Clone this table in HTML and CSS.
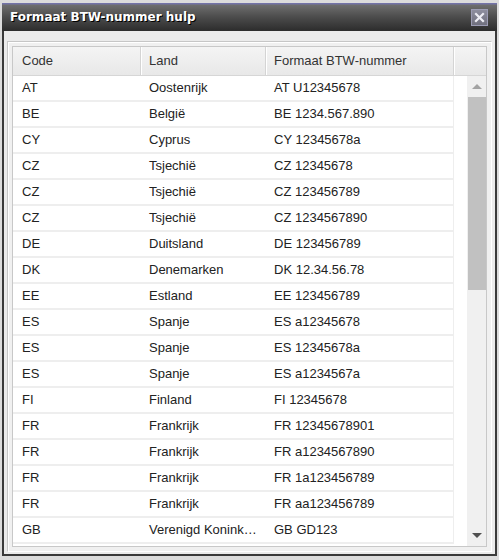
FILE: index.html
```html
<!DOCTYPE html>
<html lang="nl">
<head>
  <meta charset="UTF-8" />
  <title>Formaat BTW-nummer hulp</title>
  <link rel="stylesheet" href="styles.css">
</head>
<body>
  <div class="window">
    <div class="title-bar">
      <span class="title">Formaat BTW-nummer hulp</span>
      <span class="close-btn">
        <svg width="11" height="11" viewBox="0 0 11 11"><path d="M2 2 L9 9 M9 2 L2 9" stroke="#eeeef4" stroke-width="2.2" stroke-linecap="square"/></svg>
      </span>
    </div>
    <div class="content">
      <div class="panel">
        <div class="grid">
          <div class="grid-head">
            <div class="hcell col-code">Code</div>
            <div class="hcell col-land">Land</div>
            <div class="hcell col-fmt">Formaat BTW-nummer</div>
            <div class="hcell col-fill"></div>
          </div>
          <div class="grid-body">
            <div class="rows">
              <div class="row"><span>AT</span><span>Oostenrijk</span><span>AT U12345678</span></div>
              <div class="row"><span>BE</span><span>België</span><span>BE 1234.567.890</span></div>
              <div class="row"><span>CY</span><span>Cyprus</span><span>CY 12345678a</span></div>
              <div class="row"><span>CZ</span><span>Tsjechië</span><span>CZ 12345678</span></div>
              <div class="row"><span>CZ</span><span>Tsjechië</span><span>CZ 123456789</span></div>
              <div class="row"><span>CZ</span><span>Tsjechië</span><span>CZ 1234567890</span></div>
              <div class="row"><span>DE</span><span>Duitsland</span><span>DE 123456789</span></div>
              <div class="row"><span>DK</span><span>Denemarken</span><span>DK 12.34.56.78</span></div>
              <div class="row"><span>EE</span><span>Estland</span><span>EE 123456789</span></div>
              <div class="row"><span>ES</span><span>Spanje</span><span>ES a12345678</span></div>
              <div class="row"><span>ES</span><span>Spanje</span><span>ES 12345678a</span></div>
              <div class="row"><span>ES</span><span>Spanje</span><span>ES a1234567a</span></div>
              <div class="row"><span>FI</span><span>Finland</span><span>FI 12345678</span></div>
              <div class="row"><span>FR</span><span>Frankrijk</span><span>FR 12345678901</span></div>
              <div class="row"><span>FR</span><span>Frankrijk</span><span>FR a1234567890</span></div>
              <div class="row"><span>FR</span><span>Frankrijk</span><span>FR 1a123456789</span></div>
              <div class="row"><span>FR</span><span>Frankrijk</span><span>FR aa123456789</span></div>
              <div class="row"><span>GB</span><span>Verenigd Koninkrijk</span><span>GB GD123</span></div>
            </div>
            <div class="gap"></div>
            <div class="scrollbar">
              <div class="arrow arrow-up"></div>
              <div class="thumb"></div>
              <div class="track"></div>
              <div class="arrow arrow-down"></div>
            </div>
          </div>
        </div>
      </div>
    </div>
  </div>
</body>
</html>
```

FILE: styles.css
```css
html, body { margin: 0; padding: 0; }
body {
  background: #dcdcdc;
  font-family: "Liberation Sans", Arial, sans-serif;
  font-size: 13px;
  color: #222;
}

.window {
  box-sizing: border-box;
  margin: 3px 0 0 2px;
  width: 495px;
  height: 553px;
  border: 2px solid #3a3a3a;
  border-top: none;
  display: flex;
  flex-direction: column;
}

.title-bar {
  flex: none;
  height: 28px;
  margin: 0 -2px;
  background: linear-gradient(#7373a8 0, #7373a8 1px, #6e6e6e 2px, #4c4c4c 14px, #2c2c2c 100%);
  display: flex;
  align-items: center;
  justify-content: space-between;
  padding: 0 9px 0 8px;
}
.title {
  font-family: "DejaVu Sans", Verdana, sans-serif;
  font-weight: bold;
  font-size: 12px;
  color: #fff;
  text-shadow: 1px 1px 0 #000;
}
.close-btn {
  width: 15px;
  height: 15px;
  border: 1px solid #9c9cb4;
  background: linear-gradient(#8e8e9e, #70707e);
  display: flex;
  align-items: center;
  justify-content: center;
}

.content {
  flex: 1;
  min-height: 0;
  background: #ebebeb;
  padding: 10px 3px 2px 3px;
  display: flex;
}
.panel {
  flex: 1;
  min-height: 0;
  border: 1px solid #c6c6c6;
  border-right-color: #fff;
  border-bottom-color: #fff;
  box-shadow: inset 1px 1px 0 #fff;
  background: #f0f0f0;
  padding: 4px;
  display: flex;
}

.grid {
  flex: 1;
  min-height: 0;
  border: 1px solid #c8c8c8;
  background: #fff;
  display: flex;
  flex-direction: column;
  overflow: hidden;
}
.grid-head {
  flex: none;
  height: 28px;
  display: flex;
  background: linear-gradient(#f4f4f4, #e8e8e8);
  border-bottom: 1px solid #d6d6d6;
}
.hcell {
  box-sizing: border-box;
  padding: 0 9px;
  line-height: 28px;
  color: #333;
  border-right: 1px solid #d4d4d4;
  box-shadow: 1px 0 0 #fff;
}
.col-code { width: 128px; }
.col-land { width: 125px; padding-left: 8px; }
.col-fmt { width: 188px; padding-left: 8px; }
.col-fill { flex: 1; border-right: none; }

.grid-body {
  flex: 1;
  min-height: 0;
  display: flex;
  overflow: hidden;
}
.rows {
  width: 441px;
  flex: none;
}
.row {
  display: grid;
  grid-template-columns: 128px 125px 188px;
  height: 24px;
  line-height: 24px;
  border-bottom: 2px solid #eeeeee;
  box-shadow: inset -1px 0 0 #eeeeee;
}
.row span {
  padding: 0 8px;
  white-space: nowrap;
  overflow: hidden;
  text-overflow: ellipsis;
}
.row span:first-child { padding-left: 9px; }
.gap { width: 13px; flex: none; }

.scrollbar {
  width: 19px;
  flex: none;
  background: #f0f0f0;
  display: flex;
  flex-direction: column;
}
.arrow {
  height: 21px;
  flex: none;
  display: flex;
  align-items: center;
  justify-content: center;
}
.arrow::after {
  content: "";
  border-left: 5px solid transparent;
  border-right: 5px solid transparent;
}
.arrow-up::after { border-bottom: 5px solid #a3a3a3; }
.arrow-down::after { border-top: 5px solid #505050; }
.thumb {
  height: 193px;
  margin-left: 1px;
  background: #c1c1c1;
}
.track { flex: 1; }
```
